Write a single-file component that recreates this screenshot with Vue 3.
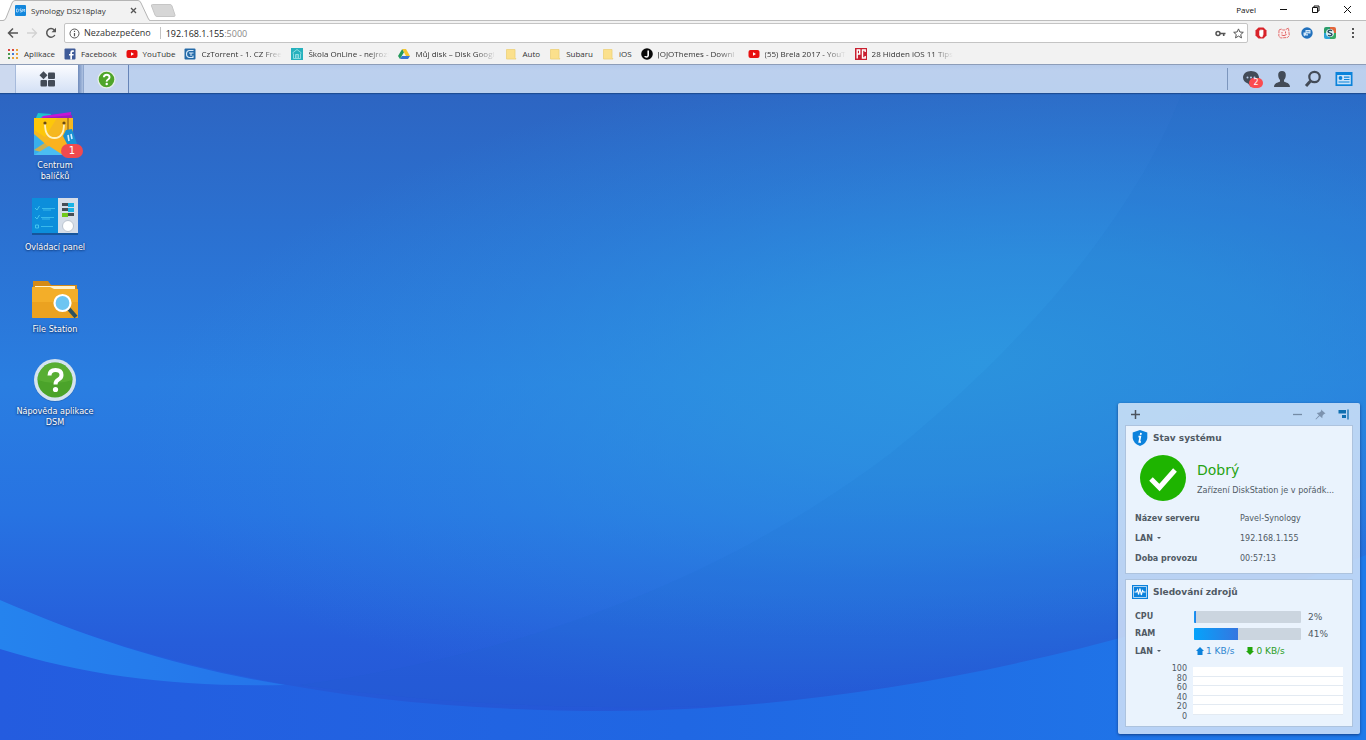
<script setup>
import { ref } from 'vue'

const address = ref('192.168.1.155')
const iface = ref('LAN')
const trafficIface = ref('LAN')

const bookmarks = [
  { icon: 'apps', label: 'Aplikace' },
  { icon: 'facebook', label: 'Facebook' },
  { icon: 'youtube', label: 'YouTube' },
  { icon: 'cztorrent', label: 'CzTorrent - 1. CZ Free', long: true },
  { icon: 'skola', label: 'Škola OnLine - nejrozš', long: true },
  { icon: 'drive', label: 'Můj disk – Disk Googl', long: true },
  { icon: 'folder', label: 'Auto' },
  { icon: 'folder', label: 'Subaru' },
  { icon: 'folder', label: 'iOS' },
  { icon: 'jojo', label: 'JOJOThemes - Downl', long: true },
  { icon: 'youtube', label: '(55) Brela 2017 - YouT', long: true },
  { icon: 'pc', label: '28 Hidden iOS 11 Tips', long: true },
]

const appColors = ['#d9453c', '#d9453c', '#e8a33a', '#4a9a4f', '#3f78d8', '#e8a33a', '#4a9a4f', '#e8a33a', '#e8a33a']

const shortcuts = [
  { icon: 'package', label: 'Centrum balíčků', badge: 1 },
  { icon: 'control', label: 'Ovládací panel' },
  { icon: 'files', label: 'File Station' },
  { icon: 'help', label: 'Nápověda aplikace DSM' },
]

const usage = [
  { name: 'CPU', value: 2 },
  { name: 'RAM', value: 41 },
]

const scale = [100, 80, 60, 40, 20, 0]
</script>

<template>
  <div class="screen">
    <header class="browser">
      <div class="tabstrip">
        <div class="tab">
          <svg class="tab-shape" viewBox="0 0 150 21" aria-hidden="true">
            <path d="M0 20.500H3Q5 20.500 6 18L12 3Q13 .5 15 .5H138Q140 .5 141 3L148 18Q149 20.500 150 20.500V21H0Z" fill="#f2f2f2" />
            <path d="M0 20.500H3Q5 20.500 6 18L12 3Q13 .5 15 .5H138Q140 .5 141 3L148 18Q149 20.500 150 20.500" fill="none" stroke="#b4b4b4" />
          </svg>
          <svg class="favicon" viewBox="0 0 11 11" aria-hidden="true">
            <rect width="11" height="11" rx="1" fill="#1387dc" />
            <path d="M1.500 4V7H2.500Q3.500 7 3.500 5.500T2.500 4ZM6.500 4H5V5.500H6.500V7H4.800M7.700 7V4L8.700 5.500 9.700 4V7" fill="none" stroke="#d4ecff" stroke-width=".7" />
          </svg>
          <span class="tab-title">Synology DS218play</span>
          <button class="plain tab-close" type="button" aria-label="Zavřít kartu">
            <svg width="7" height="7" viewBox="0 0 7 7"><path d="M1 1 6 6M6 1 1 6" stroke="#555" stroke-width="1.300" /></svg>
          </button>
        </div>
        <button class="plain new-tab" type="button" aria-label="Nová karta">
          <svg width="26" height="13" viewBox="0 0 26 13"><path d="M2.500 .5H20Q21.500 .5 22 2L25 11Q25.300 12.500 24 12.500H7Q5.500 12.500 5 11L1.500 2Q1 .5 2.500 .5Z" fill="#d6d6d6" stroke="#c6c6c6" /></svg>
        </button>
        <div class="window-controls">
          <span class="profile">Pavel</span>
          <button class="plain" type="button" aria-label="Minimalizovat">
            <svg width="9" height="9" viewBox="0 0 9 9"><path d="M1 4.500H8" stroke="#111" /></svg>
          </button>
          <button class="plain" type="button" aria-label="Obnovit">
            <svg width="9" height="9" viewBox="0 0 9 9"><path d="M1.500 2.500H6.500V7.500H1.500ZM3 2.500V1H8V6H6.500" fill="none" stroke="#111" /></svg>
          </button>
          <button class="plain" type="button" aria-label="Zavřít">
            <svg width="9" height="9" viewBox="0 0 9 9"><path d="M1 1 8 8M8 1 1 8" stroke="#111" /></svg>
          </button>
        </div>
      </div>

      <div class="toolbar">
        <button class="plain" type="button" aria-label="Zpět">
          <svg width="12" height="12" viewBox="0 0 12 12"><path d="M11 6H2M6 1.500 1.500 6 6 10.500" fill="none" stroke="#555" stroke-width="1.500" /></svg>
        </button>
        <button class="plain" type="button" aria-label="Vpřed" disabled>
          <svg width="12" height="12" viewBox="0 0 12 12"><path d="M1 6H10M6 1.500 10.500 6 6 10.500" fill="none" stroke="#d2d2d2" stroke-width="1.300" /></svg>
        </button>
        <button class="plain" type="button" aria-label="Načíst znovu">
          <svg width="12" height="12" viewBox="0 0 12 12"><path d="M9.800 8A4.300 4.300 0 1 1 9.200 3" fill="none" stroke="#555" stroke-width="1.500" /><path d="M11 .8V5.300H6.500Z" fill="#555" /></svg>
        </button>
        <div class="omnibox">
          <svg width="11" height="11" viewBox="0 0 11 11" aria-hidden="true"><circle cx="5.500" cy="5.500" r="4.500" fill="none" stroke="#555" /><path d="M5.500 5V8.200M5.500 2.800V4" stroke="#555" stroke-width="1.200" /></svg>
          <label class="security" for="address">Nezabezpečeno</label>
          <input id="address" v-model="address" class="address" type="text" spellcheck="false" />
          <span class="port">:5000</span>
          <svg width="11" height="11" viewBox="0 0 11 11" aria-hidden="true"><circle cx="3" cy="5.500" r="2" fill="none" stroke="#555" stroke-width="1.500" /><path d="M5 5.500H10.500M8.700 5.500V8" stroke="#555" stroke-width="1.600" /></svg>
          <svg width="11" height="11" viewBox="0 0 11 11" aria-hidden="true"><path d="M5.500 .9 6.900 4 10.300 4.300 7.700 6.600 8.500 9.900 5.500 8.100 2.500 9.900 3.300 6.600 .7 4.300 4.100 4Z" fill="none" stroke="#555" /></svg>
        </div>
        <div class="extensions">
          <svg width="12" height="12" viewBox="0 0 12 12"><path d="M3.500 .5H8.500L11.500 3.500V8.500L8.500 11.500H3.500L.5 8.500V3.500Z" fill="#d8232a" /><path d="M4.700 3.500V8.500L6 9.800H7.200L8 7.500V3M5.800 7V2.500M7 7V2.500" fill="#fff" stroke="#fff" stroke-width=".8" /></svg>
          <svg width="12" height="12" viewBox="0 0 12 12"><path d="M1 3 3.500 2 4.500 3 7 3 10.500 1 11.300 8.500 9.500 10.500 2.500 11 .8 9Z" fill="#fbeeee" stroke="#e06060" stroke-width=".9" stroke-dasharray="3 .7" /><path d="M4 5V6.500M7.500 4.500V6.500M3.500 8Q6 9.500 8.500 7.500" fill="none" stroke="#e06060" /></svg>
          <svg width="12" height="12" viewBox="0 0 12 12"><circle cx="6" cy="6" r="5.700" fill="#2271bd" /><path d="M4.500 3H9.500V6.500H4.500ZM2.500 5.500H7V8.500H4L3 9.500V8.500H2.500Z" fill="#d5e9fa" /><path d="M5.500 4.700H8.500M5 6.800H7.500" stroke="#2271bd" stroke-width=".7" /></svg>
          <svg width="12" height="12" viewBox="0 0 12 12"><path d="M0 2Q0 0 2 0H6V6H0Z" fill="#2b9d6b" /><path d="M6 0H10Q12 0 12 2V6H6Z" fill="#e2663b" /><path d="M0 6H6V12H2Q0 12 0 10Z" fill="#2ca5d8" /><path d="M6 6H12V10Q12 12 10 12H6Z" fill="#35a864" /><circle cx="6" cy="6" r="4" fill="#d9f0ee" /><path d="M8 3.800Q6 2.600 4.500 3.800T6 6T7.500 8.200T4 8.200" fill="none" stroke="#24445c" stroke-width="1.300" /></svg>
          <button class="plain" type="button" aria-label="Nabídka">
            <svg width="12" height="12" viewBox="0 0 12 12"><g fill="#555"><rect x="5" y="1" width="2" height="2" /><rect x="5" y="5" width="2" height="2" /><rect x="5" y="9" width="2" height="2" /></g></svg>
          </button>
        </div>
      </div>

      <nav class="bookmarks">
        <a v-for="(b, i) in bookmarks" :key="i" href="#" class="bookmark">
          <svg width="12" height="12" viewBox="0 0 12 12" aria-hidden="true">
            <g v-if="b.icon === 'apps'">
              <rect v-for="(c, n) in appColors" :key="n" :x="1 + (n % 3) * 4" :y="1 + Math.floor(n / 3) * 4" width="2" height="2" :fill="c" />
            </g>
            <g v-else-if="b.icon === 'facebook'">
              <rect x=".5" y=".5" width="11" height="11" rx="1" fill="#3f5b98" />
              <path d="M6.300 11.500V7.500H5V6H6.300V4.500Q6.300 2.300 8.300 2.300H9.800V4H8.800Q8 4 8 4.800V6H9.700L9.500 7.500H8V11.500Z" fill="#fff" />
            </g>
            <g v-else-if="b.icon === 'youtube'">
              <rect x=".5" y="2" width="11" height="8" rx="2" fill="#e81010" />
              <path d="M5 4.300V7.700L8 6Z" fill="#fff" />
            </g>
            <g v-else-if="b.icon === 'cztorrent'">
              <rect x=".5" y=".5" width="11" height="11" rx="1" fill="#256ba8" />
              <path d="M9.500 2.500H5Q2.500 3 2.500 6T5 9.500H9V7.500M5 5H9.500M7 5V8" fill="none" stroke="#d8eafa" stroke-width="1.100" />
            </g>
            <g v-else-if="b.icon === 'skola'">
              <rect width="12" height="12" fill="#26b1bd" />
              <path d="M1.500 5 6 1.500 10.500 5M2.500 5.500V10.500H9.500V5.500M4.500 10V6.500H7.500V10M6 6.500V10" fill="none" stroke="#a4e6ea" stroke-width=".8" />
            </g>
            <g v-else-if="b.icon === 'drive'">
              <path d="M4.200 1 0 8 2 11 6.100 4Z" fill="#239a5c" />
              <path d="M4.200 1H8L12 8H8Z" fill="#f4c630" />
              <path d="M4 8H12L10 11H2Z" fill="#3674d4" />
            </g>
            <path v-else-if="b.icon === 'folder'" d="M1.500 1.500H10V9.500L11 11H1.500Z" fill="#fbe08c" stroke="#ecd07a" stroke-width=".8" />
            <g v-else-if="b.icon === 'jojo'">
              <circle cx="6" cy="6" r="5.800" fill="#080808" />
              <path d="M7.200 2.500V7.500Q7 9 5.500 9T4 8" fill="none" stroke="#fff" stroke-width="1.600" />
            </g>
            <g v-else>
              <rect width="12" height="12" fill="#c92030" />
              <path d="M2.200 10.500V2H4.700V6H2.500M10.200 4V2H7.500V10H10.200V8" fill="none" stroke="#fff" stroke-width="1.400" />
            </g>
          </svg>
          <span :class="{ long: b.long }">{{ b.label }}</span>
        </a>
      </nav>
    </header>

    <div class="taskbar">
      <span class="task-edge"></span>
      <button class="plain task-menu" type="button" aria-label="Hlavní nabídka">
        <svg width="17" height="17" viewBox="0 0 17 17">
          <g fill="#434b57"><path d="M4.500 .2 8.500 4.200 4.500 8.200 .5 4.200Z" /><rect x="9" y="1.500" width="7" height="6.500" rx="1" /><rect x="1.500" y="9" width="6.500" height="6.500" rx="1" /><rect x="9" y="9" width="7" height="6.500" rx="1" /></g>
        </svg>
      </button>
      <button class="plain task-app" type="button" aria-label="Nápověda aplikace DSM">
        <svg width="19" height="19" viewBox="0 0 44 44">
          <circle cx="22" cy="22" r="21" fill="#e6efe8" /><circle cx="22" cy="22" r="18" fill="#4fa52a" />
          <path d="M16 17Q16 11 22.500 11T29 17Q29 20 25.500 22T22.500 27" fill="none" stroke="#fff" stroke-width="4.500" /><circle cx="22.500" cy="32.500" r="2.800" fill="#fff" />
        </svg>
      </button>
      <div class="tray">
        <button class="plain notify" type="button" aria-label="Oznámení">
          <svg width="18" height="18" viewBox="0 0 18 18"><path d="M9 1C13.500 1 17 3.800 17 7.500S13.500 14 9.500 14L9 17 6 13.500C3 12.500 1 10.500 1 7.500 1 3.800 4.500 1 9 1Z" fill="#434b57" /><g fill="#b9cdec"><circle cx="5.500" cy="7.500" r="1" /><circle cx="9" cy="7.500" r="1" /><circle cx="12.500" cy="7.500" r="1" /></g></svg>
          <span class="notify-count">2</span>
        </button>
        <button class="plain" type="button" aria-label="Uživatel">
          <svg width="18" height="18" viewBox="0 0 18 18"><path d="M9 1C11.500 1 12.800 2.600 12.800 5S12 8.800 11 10V11.500C13 12.700 16.800 12.800 17 17H1C1.200 12.800 5 12.700 7 11.500V10C6 8.800 5.200 7.400 5.200 5S6.500 1 9 1Z" fill="#434b57" /></svg>
        </button>
        <button class="plain" type="button" aria-label="Hledat">
          <svg width="18" height="18" viewBox="0 0 18 18"><circle cx="10.500" cy="7" r="5.200" fill="none" stroke="#434b57" stroke-width="2.200" /><path d="M6.500 11 2 16" stroke="#434b57" stroke-width="3" /></svg>
        </button>
        <button class="plain" type="button" aria-label="Widgety">
          <svg width="18" height="18" viewBox="0 0 18 18"><path d="M.5 2H17.500V16H.5Z" fill="#0b83da" /><path d="M2.200 5H15.800V14.300H2.200Z" fill="#c9e2f9" /><circle cx="5.500" cy="8" r="1.900" fill="#0b83da" /><path d="M9 7.200H14.500M9 9.500H14.500M3.500 12H14.500" stroke="#0b83da" stroke-width="1.200" /></svg>
        </button>
      </div>
    </div>

    <main class="desktop">
      <svg class="wallpaper" viewBox="0 0 1366 647" preserveAspectRatio="none" aria-hidden="true">
        <defs>
          <linearGradient id="sky" x1="0" y1="0" x2="0" y2="1">
            <stop offset="0" stop-color="#2d65c2" />
            <stop offset=".2" stop-color="#2b70d0" />
            <stop offset=".45" stop-color="#2a7ee1" />
            <stop offset=".65" stop-color="#2773e2" />
            <stop offset=".85" stop-color="#265dda" />
            <stop offset="1" stop-color="#2455d5" />
          </linearGradient>
          <radialGradient id="glow" gradientUnits="userSpaceOnUse" cx="0" cy="0" r="1" gradientTransform="translate(980 270) rotate(-6) scale(850 330)">
            <stop offset="0" stop-color="#2d99e0" stop-opacity=".9" />
            <stop offset=".3" stop-color="#2d96e0" stop-opacity=".72" />
            <stop offset=".65" stop-color="#2d92e2" stop-opacity=".32" />
            <stop offset="1" stop-color="#2d90e2" stop-opacity="0" />
          </radialGradient>
          <linearGradient id="ground" x1="0" y1="0" x2="1" y2="0">
            <stop offset="0" stop-color="#245cdf" />
            <stop offset=".5" stop-color="#2067e3" />
            <stop offset="1" stop-color="#1f7aea" />
          </linearGradient>
          <linearGradient id="lens" x1="0" y1="0" x2="1" y2="0">
            <stop offset="0" stop-color="#2583ee" />
            <stop offset="1" stop-color="#2574ea" />
          </linearGradient>
        </defs>
        <rect width="1366" height="647" fill="url(#sky)" />
        <rect width="1366" height="647" fill="url(#glow)" />
        <path d="M1182 0C1140 110 1040 240 891 360 740 475 540 560 300 592 800 660 1200 560 1366 462V0Z" fill="#1c66c4" fill-opacity=".08" />
        <path d="M0 507C180 585 380 618 610 618S1130 560 1366 462V647H0Z" fill="url(#ground)" />
        <path d="M0 507C90 546 180 575 285 592C180 594 90 584 0 556Z" fill="url(#lens)" />
      </svg>

      <ul class="shortcuts">
        <li v-for="s in shortcuts" :key="s.label">
          <a href="#" class="shortcut">
            <span class="shortcut-icon">
              <svg v-if="s.icon === 'package'" width="48" height="48" viewBox="0 0 48 48">
                <path d="M7 3 20 4 18 10H4Z" fill="#1fc4cb" /><path d="M12 6 40 2 39 10H8Z" fill="#c417d6" /><path d="M11 8 41 5V12H6Z" fill="#9a1cc0" />
                <path d="M3 8H42V45H3Z" fill="#f5b820" /><path d="M3 8H26L14 27 3 20Z" fill="#fdc70a" /><path d="M3 24 27 45H3Z" fill="#38b0ec" /><path d="M3 40 36 18 42 22V45H20Z" fill="#fbb01f" fill-opacity=".75" /><path d="M3 45 18 36 32 45Z" fill="#4bbdf2" />
                <path d="M14 14Q14 28 23.500 28T33 14" fill="none" stroke="#fff3c0" stroke-width="1.800" /><circle cx="14" cy="13" r="1.600" fill="#6a4912" /><circle cx="33" cy="13" r="1.600" fill="#6a4912" />
                <path d="M37 8V21" stroke="#80541a" /><path d="M35 20 41 19 46 34 38 38 32 26Z" fill="#1991d2" /><path d="M37 25 38 31M40 24 41 29" stroke="#d7f0ff" stroke-width="1.600" />
              </svg>
              <svg v-else-if="s.icon === 'control'" width="48" height="48" viewBox="0 0 48 48">
                <path d="M1 6H27V42H1Z" fill="#0c8edb" /><path d="M27 6H47V42H27Z" fill="#d5dde8" /><path d="M1 41H47V43H1Z" fill="#17559b" />
                <g fill="none" stroke="#45c4ef"><path d="M4 16 6 18 8.500 14M4 25 6 27 8.500 23M4.500 33H7.500V36H4.500Z" /><path d="M11 16.500H24M10 25.500H23M10 34.500H22M12 18H20M11 27H19" stroke-width=".8" /></g>
                <path d="M31 11H38V14H31ZM31 16H38V19H31ZM36 21H43V24H36Z" fill="#454d55" /><path d="M37 11H43V15H37ZM37 16H43V20H37Z" fill="#19b3e5" /><path d="M31 21H37V25H31Z" fill="#71c91e" />
                <circle cx="37" cy="34" r="5.500" fill="#fff" stroke="#bcc5d0" />
              </svg>
              <svg v-else-if="s.icon === 'files'" width="48" height="48" viewBox="0 0 48 48">
                <path d="M2 7H17L20 11H46V28H2Z" fill="#d58a16" /><path d="M4 12H44V20H4Z" fill="#fff1ca" /><path d="M1 13H19L23 15H47V43Q47 44 46 44H2Q1 44 1 43Z" fill="#f3ae29" /><path d="M1 28H47V43Q47 44 46 44H2Q1 44 1 43Z" fill="#e69a1b" fill-opacity=".6" />
                <path d="M38 35 45 43" stroke="#2d5260" stroke-width="4" /><circle cx="31.500" cy="29" r="8" fill="#6dc5f2" stroke="#fff" stroke-width="2.200" />
              </svg>
              <svg v-else width="48" height="48" viewBox="0 0 48 48">
                <circle cx="24" cy="25" r="21" fill="#235da8" fill-opacity=".5" /><circle cx="24" cy="24" r="21" fill="#d5e3ef" /><circle cx="24" cy="24" r="17.500" fill="#4ba32a" /><path d="M6.500 24A17.500 17.500 0 0 1 41.500 24Q24 30 6.500 24Z" fill="#61b53a" fill-opacity=".6" />
                <path d="M18.500 19.500Q18.500 14 24.500 14T30.500 19Q30.500 22 27.500 23.500T24.500 28.500" fill="none" stroke="#fff" stroke-width="4" /><circle cx="24.500" cy="33.500" r="2.600" fill="#fff" />
              </svg>
              <span v-if="s.badge" class="badge">{{ s.badge }}</span>
            </span>
            <span class="shortcut-label">{{ s.label }}</span>
          </a>
        </li>
      </ul>

      <aside class="widgets">
        <div class="widgets-head">
          <button class="plain" type="button" aria-label="Přidat">
            <svg width="11" height="11" viewBox="0 0 11 11"><path d="M5.500 1V10M1 5.500H10" stroke="#4b535e" stroke-width="1.500" /></svg>
          </button>
          <span class="spacer"></span>
          <button class="plain" type="button" aria-label="Minimalizovat">
            <svg width="11" height="11" viewBox="0 0 11 11"><path d="M1 5.500H10" stroke="#748ba5" stroke-width="1.300" /></svg>
          </button>
          <button class="plain" type="button" aria-label="Připnout">
            <svg width="11" height="11" viewBox="0 0 11 11"><path d="M6 .5 10.500 4.500 9 5 7.500 6.800 7.300 9.300 4.700 7 1 10.500 .5 10 4 6.300 1.700 4 4.500 3.500 6.200 2Z" fill="#7c93af" /></svg>
          </button>
          <button class="plain" type="button" aria-label="Ukotvit">
            <svg width="11" height="11" viewBox="0 0 11 11"><path d="M.5 1H8V4.500H.5ZM4 6H8V9H4Z" fill="#0e6fb0" /><path d="M10 .5V10.500" stroke="#0e6fb0" stroke-width="1.300" /></svg>
          </button>
        </div>

        <section class="card">
          <h2>
            <svg width="16" height="16" viewBox="0 0 16 16"><path d="M8 0 15.300 2.500V8Q15 13 8 16 1 13 .7 8V2.500Z" fill="#0c82dc" /><path d="M9 2.800 8.600 4.800M6.500 6.700H8.300L7.300 12H9" fill="none" stroke="#fff" stroke-width="1.700" /></svg>
            Stav systému
          </h2>
          <div class="status">
            <svg width="46" height="46" viewBox="0 0 46 46"><circle cx="23" cy="23" r="23" fill="#1eb400" /><path d="M11 24 19.500 32.500 35 15" fill="none" stroke="#fff" stroke-width="5" /></svg>
            <div class="status-text">
              <strong>Dobrý</strong>
              <p>Zařízení DiskStation je v pořádk...</p>
            </div>
          </div>
          <table class="facts">
            <tbody>
              <tr><th scope="row">Název serveru</th><td>Pavel-Synology</td></tr>
              <tr>
                <th scope="row">
                  <span class="picker"><select v-model="iface" aria-label="Rozhraní"><option>LAN</option></select></span>
                </th>
                <td>192.168.1.155</td>
              </tr>
              <tr><th scope="row">Doba provozu</th><td>00:57:13</td></tr>
            </tbody>
          </table>
        </section>

        <section class="card">
          <h2>
            <svg width="16" height="16" viewBox="0 0 16 16"><path d="M0 1H16V15H0Z" fill="#0c82dc" /><path d="M1.500 2.500H14.500V13.500H1.500Z" fill="none" stroke="#d9ecfb" stroke-width=".8" /><path d="M2.500 8H4.500L5.500 6 6.500 10.500 8 4.500 9.300 11 10.500 6.500 11.500 8H13.500" fill="none" stroke="#fff" stroke-width="1.100" /></svg>
            Sledování zdrojů
          </h2>
          <div v-for="u in usage" :key="u.name" class="usage">
            <span class="usage-name">{{ u.name }}</span>
            <span class="bar"><span class="fill" :style="{ width: u.value + '%' }"></span></span>
            <span>{{ u.value }}%</span>
          </div>
          <div class="traffic">
            <span class="picker"><select v-model="trafficIface" aria-label="Síť"><option>LAN</option></select></span>
            <span class="rate up">
              <svg width="8" height="8" viewBox="0 0 8 8"><path d="M4 0 8 4H6.500V8H1.500V4H0Z" fill="#0c82dc" /></svg>1 KB/s
            </span>
            <span class="rate down">
              <svg width="8" height="8" viewBox="0 0 8 8"><path d="M4 8 8 4H6.500V0H1.500V4H0Z" fill="#22a60c" /></svg>0 KB/s
            </span>
          </div>
          <div class="chart">
            <div class="axis"><span v-for="n in scale" :key="n">{{ n }}</span></div>
            <div class="plot"><i v-for="n in 5" :key="n"></i></div>
          </div>
        </section>
      </aside>
    </main>
  </div>
</template>

<style>
body {
  margin: 0;
}
</style>

<style scoped>
.screen {
  display: flex;
  flex-direction: column;
  min-height: 100vh;
  font-family: 'DejaVu Sans', Verdana, sans-serif;
  font-size: 8px;
  color: #505a64;
}

.plain {
  display: grid;
  place-items: center;
  padding: 0;
  border: 0;
  background: none;
}

svg {
  display: block;
  flex-shrink: 0;
}

/* browser frame */
.browser {
  background: #f2f2f2;
  border-bottom: 1px solid #8d9db8;
  font-family: 'Open Sans', 'Segoe UI', sans-serif;
  color: #333;
}

.tabstrip {
  display: flex;
  box-sizing: border-box;
  height: 21px;
  background: #fff;
  border-bottom: 1px solid #bdbdbd;
}

.tab {
  position: relative;
  display: flex;
  align-items: center;
  width: 150px;
  height: 21px;
  padding-left: 15px;
  box-sizing: border-box;
}

.tab-shape {
  position: absolute;
  inset: 0;
  width: 150px;
  height: 21px;
}

.favicon,
.tab-title,
.tab-close {
  position: relative;
}

.favicon {
  width: 11px;
  height: 11px;
}

.tab-title {
  width: 99px;
  padding-left: 5px;
  line-height: 10px;
}

.new-tab {
  align-self: center;
}

.window-controls {
  display: flex;
  align-items: center;
  gap: 23px;
  margin-left: auto;
  padding: 0 14px 2px 0;
}

.profile {
  color: #111;
}

.toolbar {
  display: flex;
  align-items: center;
  gap: 7px;
  height: 24px;
  padding: 0 7px;
}

.omnibox {
  display: flex;
  flex: 1;
  align-items: center;
  box-sizing: border-box;
  height: 20px;
  padding: 0 3px 0 4px;
  background: #fff;
  border: 1px solid #c4c4c4;
  border-radius: 2px;
  font-size: 9px;
}

.security {
  padding: 0 9px 0 4px;
  border-right: 1px solid #c4c4c4;
  line-height: 12px;
}

.address {
  field-sizing: content;
  padding: 0;
  margin-left: 5px;
  border: 0;
  outline: 0;
  background: none;
  font: inherit;
  color: #222;
}

.port {
  flex: 1;
  color: #888;
}

.omnibox > svg + svg {
  margin-left: 7px;
}

.extensions {
  display: flex;
  gap: 11px;
}

.bookmarks {
  display: flex;
  align-items: center;
  gap: 9px;
  box-sizing: border-box;
  height: 19px;
  padding: 0 0 1px 7px;
}

.bookmark {
  display: flex;
  align-items: center;
  gap: 5px;
  color: #333;
  line-height: 10px;
  text-decoration: none;
  white-space: nowrap;
}

.long {
  width: 81px;
  overflow: hidden;
  mask-image: linear-gradient(to right, #000 75%, transparent);
}

/* DSM task bar */
.taskbar {
  position: relative;
  z-index: 1;
  display: flex;
  height: 28px;
  background: linear-gradient(#b5caeb, #bcd0ee 20%, #bad0ee);
  box-shadow: 0 1px 1px #1d4d95;
}

.task-edge {
  width: 15px;
  background: #ccd9ef;
  border-right: 1px solid #a6badb;
}

.task-menu {
  width: 62px;
  background: linear-gradient(#fbfcff, #d3e0f5);
}

.task-app {
  box-sizing: border-box;
  width: 51px;
  padding-left: 6px;
  border-right: 1px solid #6684b8;
  background: linear-gradient(to right, #6f8bbb, #aec2e2 5px, #8fa7ce 5px, #8fa7ce 6px, #c5d5ef 6px);
}

.tray {
  display: flex;
  gap: 13px;
  align-items: center;
  margin: 3px 13px 3px auto;
  padding-left: 14px;
  border-left: 1px solid #7c96bd;
}

.notify {
  position: relative;
}

.notify-count {
  position: absolute;
  right: -3px;
  bottom: 0;
  width: 14px;
  border-radius: 5px;
  background: #fb4b50;
  color: #fff;
  font: 8px/10px 'DejaVu Sans', sans-serif;
}

/* desktop */
.desktop {
  position: relative;
  display: flex;
  flex: 1;
  justify-content: space-between;
  background: #2a7be0;
}

.wallpaper {
  position: absolute;
  inset: 0;
  width: 100%;
  height: 100%;
}

.shortcuts {
  position: relative;
  width: 110px;
  margin: 0;
  padding: 17px 0 0;
  list-style: none;
}

.shortcuts li {
  height: 82px;
}

.shortcut {
  display: flex;
  flex-direction: column;
  gap: 2px;
  align-items: center;
  color: #fff;
  text-align: center;
  text-decoration: none;
  text-shadow: 0 1px 2px #123a78, 0 0 2px #123a78;
}

.shortcut-icon {
  position: relative;
}

.badge {
  position: absolute;
  right: -4px;
  bottom: 0;
  width: 22px;
  border-radius: 7px;
  background: #f04a4f;
  font-size: 10px;
  line-height: 14px;
  text-shadow: none;
}

.shortcut-label {
  max-width: 90px;
  font-family: 'DejaVu Sans Condensed', Tahoma, sans-serif;
  font-size: 9px;
  line-height: 11px;
}

.shortcuts li:first-child .shortcut-label {
  max-width: 50px;
}

/* widget panel */
.widgets {
  position: relative;
  display: flex;
  flex-direction: column;
  gap: 5px;
  align-self: flex-end;
  box-sizing: border-box;
  width: 242px;
  margin: 0 6px 6px 0;
  padding: 0 7px 7px;
  border-radius: 2px;
  background: rgba(222, 234, 249, 0.8);
  box-shadow: 0 1px 3px #123f88;
}

.widgets-head {
  display: flex;
  align-items: center;
  gap: 12px;
  height: 22px;
  margin-bottom: -5px;
  padding: 0 4px 0 5px;
}

.spacer {
  flex: 1;
}

.card {
  padding: 3px 9px 5px;
  border: 1px solid #adc3de;
  background: #eaf3fd;
}

.card h2 {
  display: flex;
  align-items: center;
  gap: 5px;
  height: 18px;
  margin: 0 0 7px -3px;
  font-size: 9px;
  color: #505a64;
}

.status {
  display: flex;
  gap: 11px;
  align-items: center;
  height: 48px;
  padding-left: 5px;
  margin-bottom: 6px;
}

.status strong {
  display: block;
  font-size: 14px;
  font-weight: 400;
  line-height: 20px;
  color: #27a313;
}

.status p {
  margin: 4px 0 0;
  font-family: 'DejaVu Sans Condensed', Tahoma, sans-serif;
  font-size: 9px;
  line-height: 12px;
  white-space: nowrap;
}

.facts {
  width: 100%;
  border-collapse: collapse;
}

.facts th,
.facts td {
  height: 20px;
  padding: 0;
  font-size: 8px;
  text-align: left;
}

.facts th {
  width: 105px;
}

.picker {
  display: inline-flex;
  align-items: center;
  gap: 4px;
}

.picker::after {
  content: '';
  border: 2px solid transparent;
  border-top-color: #505a64;
  border-bottom: 0;
}

.picker select {
  appearance: none;
  padding: 0;
  border: 0;
  background: none;
  font: bold 8px 'DejaVu Sans', sans-serif;
  color: #505a64;
}

.usage,
.traffic {
  display: flex;
  align-items: center;
  height: 17px;
  font-size: 9px;
}

.usage-name {
  width: 59px;
  font-size: 8px;
  font-weight: bold;
}

.bar {
  width: 107px;
  height: 12px;
  margin-right: 7px;
  border-radius: 1px;
  overflow: hidden;
  background: #cbd5df;
}

.fill {
  display: block;
  height: 100%;
  background: linear-gradient(to right, #05a3fb, #3576e0);
}

.traffic {
  height: 18px;
}

.traffic .picker {
  width: 61px;
}

.rate {
  display: flex;
  align-items: center;
  gap: 2px;
  margin-right: 12px;
}

.up {
  color: #2f86d0;
}

.down {
  color: #2a9e1e;
}

.chart {
  display: flex;
  gap: 6px;
  height: 57px;
  margin-top: 4px;
}

.axis {
  display: flex;
  flex-direction: column;
  justify-content: space-between;
  width: 52px;
  line-height: 9px;
  text-align: right;
}

.plot {
  display: flex;
  flex-direction: column;
  width: 150px;
  height: 48px;
  margin-top: 3px;
  background: #fff;
}

.plot i {
  flex: 1;
  border-bottom: 1px solid #e3eaf2;
}
</style>
